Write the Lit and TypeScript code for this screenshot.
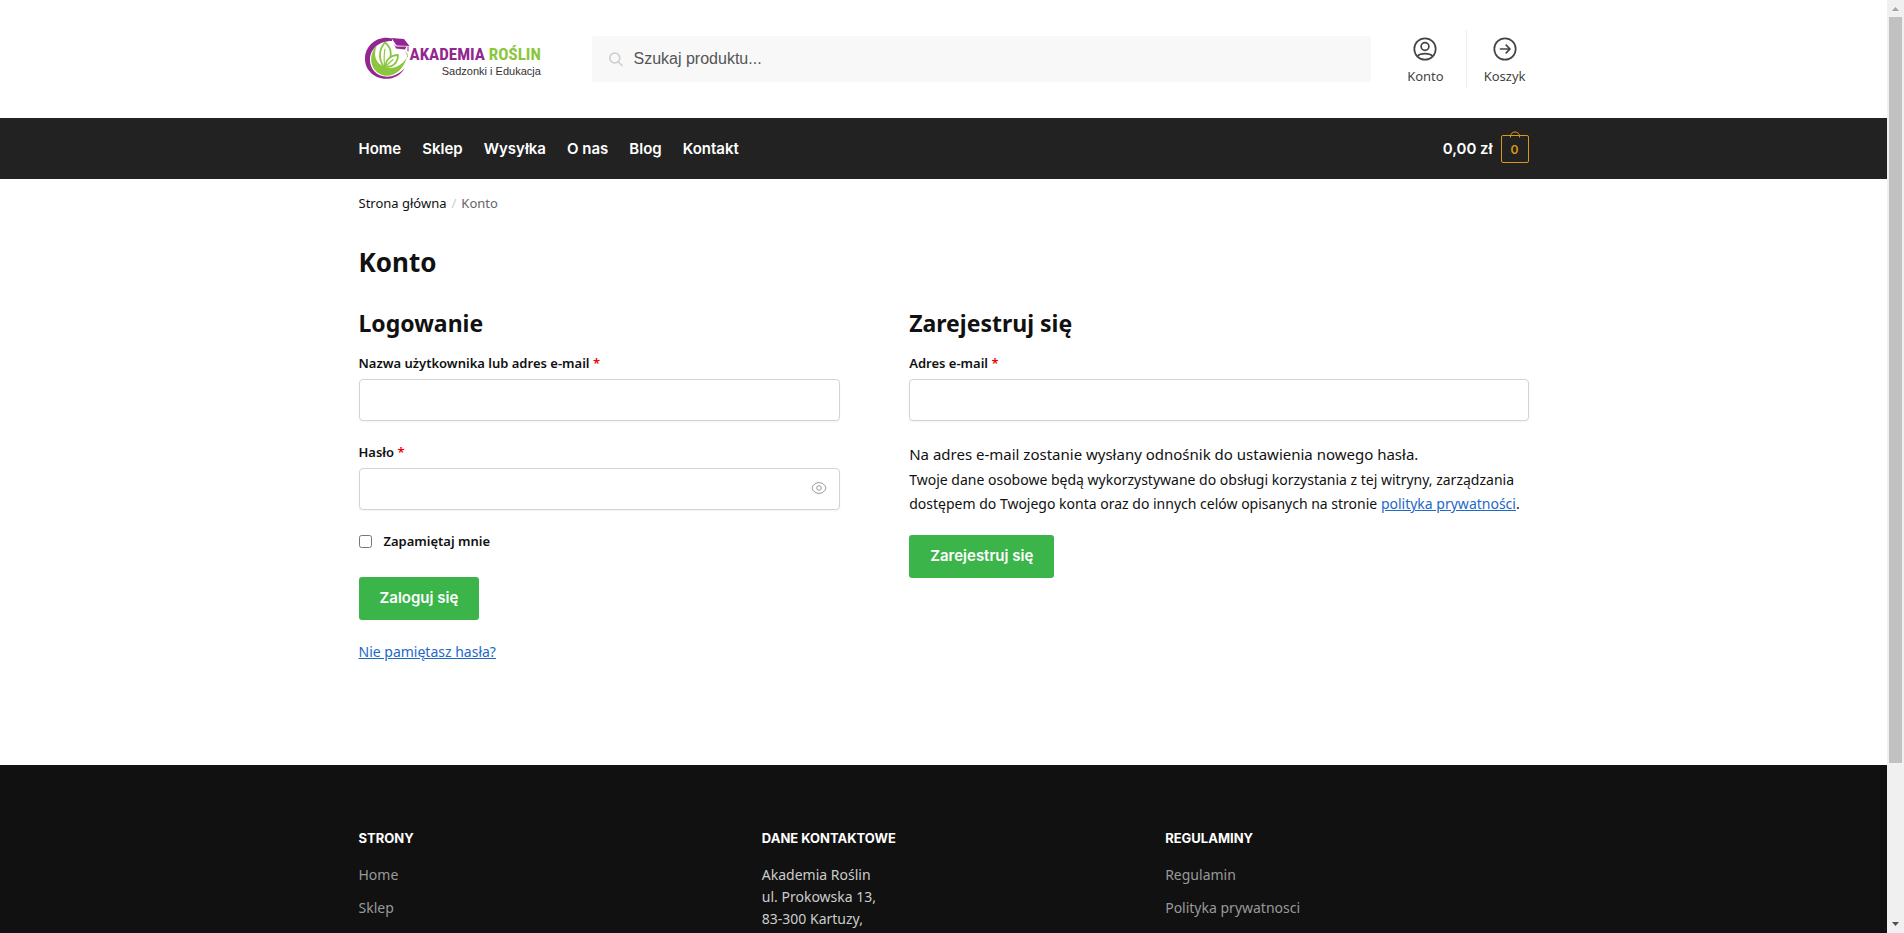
import { LitElement, html, css } from "lit";
import { customElement, state } from "lit/decorators.js";

const NAV = ["Home", "Sklep", "Wysyłka", "O nas", "Blog", "Kontakt"];
const PAGES = ["Home", "Sklep"];
const RULES = ["Regulamin", "Polityka prywatnosci"];

@customElement("shop-logo")
class ShopLogo extends LitElement {
  static styles = css`
    :host { display: block; }
    .logo { display: flex; align-items: center; text-decoration: none; }
    .mark { width: 45px; height: 44px; flex: none; }
    .words { display: flex; flex-direction: column; align-items: flex-end; white-space: nowrap; padding-top: 4px; }
    .name { font: 700 17px/20px "Liberation Sans Narrow", "Roboto Condensed", "Liberation Sans", sans-serif; color: #92278f; }
    .green { color: #8cc63f; }
    .tag { font: 11px/14px "Liberation Sans", Arial, sans-serif; color: #333; }
  `;
  render() {
    return html`<a class="logo" href="#" aria-label="Akademia Roślin">
      <svg class="mark" viewBox="0 0 45 44" aria-hidden="true">
        <path d="M27 1.500C13 -2 0 8 0 22C0 42 29 50 40 31C30 42 16 42 9 34C0 23 6 4 27 4z" fill="#92278f"/>
        <path d="M12 8C3 18 5 31 14 36.500C25 43 38 35 42 20C37 29 28 33 20 30C10 27 8 17 12 8z" fill="#8cc63f"/>
        <path d="M19 30C13 22 14 12 20 5.500C27 11 28 20 21 29z" fill="#fff" stroke="#8cc63f" stroke-width="1.800" stroke-linejoin="round"/>
        <path d="M21 29.500C20 23 26 18 33 18C33 25 28 31 21 29.500z" fill="#fff" stroke="#8cc63f" stroke-width="1.800" stroke-linejoin="round"/>
        <path d="M19.500 29C19 23 19 17 20 12M22 28L28 22.500" fill="none" stroke="#8cc63f" stroke-width="1.200" stroke-linecap="round"/>
        <path d="M26.500 1L39 2L44.500 9L31.500 8.500z" fill="#92278f"/>
        <path d="M29 7L31 11.500L40 12.500L41.500 9.500L31 9.500z" fill="#92278f"/>
        <path d="M43 9.500V14.500" fill="none" stroke="#92278f"/>
        <path d="M40.500 15C42 16 42.500 18 42.500 20" fill="none" stroke="#8cc63f"/>
      </svg>
      <span class="words">
        <span class="name">AKADEMIA <span class="green">ROŚLIN</span></span>
        <span class="tag">Sadzonki i Edukacja</span>
      </span>
    </a>`;
  }
}

@customElement("page-scrollbar")
class PageScrollbar extends LitElement {
  static styles = css`
    :host { display: flex; flex-direction: column; width: 17px; flex: none; background: #f0f0f0; }
    .arrow { height: 17px; width: 17px; flex: none; }
    .thumb { flex: 746; margin: 0 2px; background: #c1c1c1; }
    .rest { flex: 153; }
  `;
  render() {
    return html`
      <svg class="arrow" viewBox="0 0 17 17"><path d="M5 11L8.500 7L12 11z" fill="#a3a3a3"/></svg>
      <div class="thumb"></div>
      <div class="rest"></div>
      <svg class="arrow" viewBox="0 0 17 17"><path d="M5 6L8.500 10L12 6z" fill="#505050"/></svg>
    `;
  }
}

@customElement("app-root")
class AppRoot extends LitElement {
  @state() private showPassword = false;

  static styles = css`
    :host {
      display: flex;
      height: 100vh;
      background: #fff;
      color: #111;
      font: 15px/24px "Noto Sans", "Open Sans", sans-serif;
    }
    * { box-sizing: border-box; }
    h1, h2, h3, p, ul { margin: 0; padding: 0; }
    ul { list-style: none; }
    a { color: inherit; text-decoration: none; }
    .page { flex: 1; min-width: 0; overflow-y: auto; scrollbar-width: none; }
    .wrap { max-width: 1170px; margin: 0 auto; }

    .top { display: flex; align-items: center; height: 118px; }
    .brand { width: 233px; padding-left: 6px; flex: none; }
    .search { flex: 1; height: 46px; display: flex; align-items: center; gap: 10px; padding: 0 16px; background: #f8f8f8; border-radius: 3px; }
    .search svg { width: 16px; height: 16px; flex: none; }
    .search input { flex: 1; min-width: 0; border: 0; outline: 0; background: none; padding: 0; height: 44px; font: 16px/24px "Liberation Sans", Arial, sans-serif; color: #444; }
    .search input::placeholder { color: #555; opacity: 1; }
    .tools { display: flex; flex: none; padding-left: 20px; }
    .tool { display: flex; flex-direction: column; align-items: center; gap: 4px; height: 58px; padding: 6px 16px 0; font-size: 13px; line-height: 20px; color: #444; }
    .tool:first-child { padding-right: 22px; }
    .tool + .tool { border-left: 1px solid #eee; padding-right: 3px; padding-left: 17px; }
    .tool svg { width: 26px; height: 26px; }

    .bar { background: #222; color: #fff; font: 600 15px/24px Inter, sans-serif; }
    .bar-in { display: flex; align-items: center; justify-content: space-between; height: 61px; }
    .menu { display: flex; gap: 21px; }
    .cart { display: flex; align-items: center; gap: 8px; }
    .bag { position: relative; width: 28px; height: 28px; border: 1px solid #dc9814; border-radius: 2px; color: #dc9814; font-size: 12px; line-height: 27px; text-align: center; }
    .bag svg { position: absolute; left: 7px; top: -5px; width: 12px; height: 8px; }

    .crumbs { display: flex; gap: 5px; padding: 14px 0; font-size: 13px; line-height: 20px; color: #666; }
    .crumbs a { color: #111; }
    .sep { color: #ccc; }
    h1 { font-size: 26px; line-height: 40px; padding: 15px 0; }
    h2 { font-size: 23px; line-height: 32px; padding-bottom: 14px; }
    .cols { display: grid; grid-template-columns: 7fr 9fr; gap: 69px; padding: 10px 0 101px; align-items: start; }
    .field { display: flex; flex-direction: column; gap: 6px; margin-bottom: 21px; }
    label { font-size: 13px; line-height: 20px; font-weight: 600; }
    .req { color: #e00; }
    .box { position: relative; display: flex; }
    .box input { width: 100%; height: 42px; padding: 0 12px; border: 1px solid #d2d2dc; border-radius: 4px; background: #fff; box-shadow: 0 1px 2px rgba(0, 0, 0, .05); font: inherit; }
    .eye { position: absolute; right: 13px; top: 12px; width: 16px; height: 16px; padding: 0; border: 0; background: none; }
    .eye svg { display: block; width: 16px; height: 16px; }
    .remember { display: flex; align-items: center; gap: 12px; }
    .remember input { width: 13px; height: 13px; margin: 0; }
    .btn { display: block; height: 43px; padding: 0 21px 1px; border: 0; border-radius: 3px; background: #3bb54a; color: #fff; font: 600 15px/24px Inter, sans-serif; }
    .login-btn { margin: 26px 0 20px; }
    .link { color: #1e68c8; text-decoration: underline; }
    .forgot { font-size: 14px; }
    .note { padding-bottom: 2px; }
    .fine { font-size: 14px; margin-bottom: 19px; }

    footer { background: #111; color: #ccc; padding: 61px 0; font-size: 14px; line-height: 22px; }
    .foot { display: grid; grid-template-columns: repeat(3, 1fr); column-gap: 40px; }
    h3 { font: 700 13px/24px Inter, sans-serif; color: #fff; text-transform: uppercase; padding-bottom: 14px; }
    .foot ul { display: flex; flex-direction: column; gap: 11px; color: #999; }
    @media (max-width: 1190px) {
      .wrap { margin: 0 16px; }
    }
  `;

  render() {
    return html`
      <div class="page">
        <header>
          <div class="wrap top">
            <div class="brand"><shop-logo></shop-logo></div>
            <form class="search" role="search">
              <svg viewBox="0 0 16 16" fill="none" stroke="#ccc" stroke-width="1.500" stroke-linecap="round"><circle cx="6.800" cy="7" r="5"/><path d="M10.500 11L14 14.500"/></svg>
              <input type="search" placeholder="Szukaj produktu..." aria-label="Szukaj produktu" />
            </form>
            <div class="tools">
              <a class="tool" href="#">
                <svg viewBox="0 0 26 26" fill="none" stroke="#444" stroke-width="1.700"><circle cx="13" cy="13" r="10.700"/><circle cx="13" cy="10.500" r="3.900"/><path d="M5.500 20C8.500 16.800 17.500 16.800 20.500 20"/></svg>
                <span>Konto</span>
              </a>
              <a class="tool" href="#">
                <svg viewBox="0 0 26 26" fill="none" stroke="#444" stroke-width="1.700" stroke-linejoin="round" stroke-linecap="round"><circle cx="13" cy="13" r="10.700"/><path d="M8.500 13H18M14.200 9.200L18 13L14.200 16.800"/></svg>
                <span>Koszyk</span>
              </a>
            </div>
          </div>
          <div class="bar">
            <div class="wrap bar-in">
              <nav class="menu">${NAV.map((n) => html`<a href="#">${n}</a>`)}</nav>
              <a class="cart" href="#">
                <span>0,00 zł</span>
                <span class="bag"><svg viewBox="0 0 12 8" fill="none" stroke="#dc9814"><path d="M1.500 6.500V5A4.500 4 0 0 1 10.500 5V6.500"/></svg>0</span>
              </a>
            </div>
          </div>
        </header>
        <main class="wrap">
          <nav class="crumbs"><a href="#">Strona główna</a><span class="sep">/</span><span>Konto</span></nav>
          <h1>Konto</h1>
          <div class="cols">
            <section>
              <h2>Logowanie</h2>
              <div class="field">
                <label for="user">Nazwa użytkownika lub adres e-mail <span class="req">*</span></label>
                <div class="box"><input id="user" type="text" /></div>
              </div>
              <div class="field">
                <label for="pass">Hasło <span class="req">*</span></label>
                <div class="box">
                  <input id="pass" type=${this.showPassword ? "text" : "password"} />
                  <button class="eye" type="button" aria-label="Pokaż hasło" @click=${() => (this.showPassword = !this.showPassword)}>
                    <svg viewBox="0 0 16 16" fill="none" stroke="#999"><path d="M1 8C3 .800 13 .800 15 8C13 15.200 3 15.200 1 8z"/><circle cx="8" cy="8" r="2.300"/></svg>
                  </button>
                </div>
              </div>
              <label class="remember"><input type="checkbox" /><span>Zapamiętaj mnie</span></label>
              <button class="btn login-btn" type="button">Zaloguj się</button>
              <p class="forgot"><a class="link" href="#">Nie pamiętasz hasła?</a></p>
            </section>
            <section>
              <h2>Zarejestruj się</h2>
              <div class="field">
                <label for="mail">Adres e-mail <span class="req">*</span></label>
                <div class="box"><input id="mail" type="email" /></div>
              </div>
              <p class="note">Na adres e-mail zostanie wysłany odnośnik do ustawienia nowego hasła.</p>
              <p class="fine">Twoje dane osobowe będą wykorzystywane do obsługi korzystania z tej witryny, zarządzania dostępem do Twojego konta oraz do innych celów opisanych na stronie <a class="link" href="#">polityka prywatności</a>.</p>
              <button class="btn" type="button">Zarejestruj się</button>
            </section>
          </div>
        </main>
        <footer>
          <div class="wrap foot">
            <section><h3>Strony</h3><ul>${PAGES.map((n) => html`<li><a href="#">${n}</a></li>`)}</ul></section>
            <section><h3>Dane kontaktowe</h3><p>Akademia Roślin<br />ul. Prokowska 13,<br />83-300 Kartuzy,</p></section>
            <section><h3>Regulaminy</h3><ul>${RULES.map((n) => html`<li><a href="#">${n}</a></li>`)}</ul></section>
          </div>
        </footer>
      </div>
      <page-scrollbar aria-hidden="true"></page-scrollbar>
    `;
  }
}
